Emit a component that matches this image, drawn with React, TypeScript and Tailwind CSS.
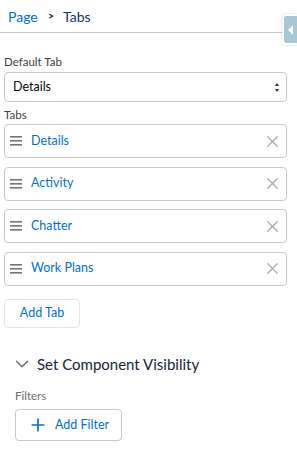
import { X, Plus, ChevronDown } from "lucide-react"

const tabs = ["Details", "Activity", "Chatter", "Work Plans"]

function Grip() {
    return (
        <svg width="12" height="10" viewBox="0 0 12 10" className="shrink-0">
            <rect x="0" y="0" width="12" height="1.6" fill="#747474" />
            <rect x="0" y="4" width="12" height="1.6" fill="#747474" />
            <rect x="0" y="8" width="12" height="1.6" fill="#747474" />
        </svg>
    )
}

export default function App() {
    return (
        <div className="relative h-[458px] w-[297px] overflow-hidden bg-white font-['Lato',sans-serif] text-[#16325c]">
            {/* Breadcrumb */}
            <div className="mr-[12px] flex h-[33px] items-center border-b border-[#c4c4c4] pl-[8px] text-[14px]">
                <span className="text-[#0070d2]">Page</span>
                <span className="ml-[10px] text-[11px] font-bold text-[#16325c]">&gt;</span>
                <span className="ml-[9px]">Tabs</span>
            </div>

            {/* Collapse tab on the edge */}
            <div className="absolute right-0 top-[14px] flex h-[31px] w-[15px] items-center justify-center rounded-l-[4px] border-y-2 border-l-2 border-white bg-[#a9c8d6] shadow-[0_0_2px_rgba(0,0,0,0.25)]">
                <div className="h-0 w-0 border-y-[5px] border-r-[5px] border-y-transparent border-r-white" />
            </div>

            <div className="px-[4px] pt-[21px]">
                {/* Default Tab */}
                <div className="text-[11.5px] leading-[16px] text-[#3e3e3c]">Default Tab</div>
                <div className="mt-[2px] flex h-[30px] w-[283px] items-center justify-between rounded-[4px] border border-[#c9c9c9] pl-[8px] pr-[7px] text-[12.5px] text-[#080707]">
                    <span>Details</span>
                    <span className="flex flex-col items-center gap-[3px]">
                        <span className="h-0 w-0 border-x-[2.5px] border-b-[3px] border-x-transparent border-b-[#16325c]" />
                        <span className="h-0 w-0 border-x-[2.5px] border-t-[3px] border-x-transparent border-t-[#16325c]" />
                    </span>
                </div>

                {/* Tabs */}
                <div className="mt-[5px] text-[11.5px] leading-[16px] text-[#3e3e3c]">Tabs</div>
                <div className="mt-[1px] flex flex-col gap-[8.6px]">
                    {tabs.map((t) => (
                        <div key={t} className="flex h-[34px] w-[283px] items-center rounded-[4px] border border-[#c9c9c9] pl-[5px] pr-[4px]">
                            <Grip />
                            <span className="ml-[9px] flex-1 text-[12.5px] text-[#0070d2]">{t}</span>
                            <X size={19} strokeWidth={1.5} color="#a8a6a4" />
                        </div>
                    ))}
                </div>

                {/* Add Tab */}
                <button className="mt-[13px] flex h-[29px] w-[76px] items-center justify-center rounded-[4px] border border-[#e5e5e5] text-[12.5px] text-[#0070d2]">
                    Add Tab
                </button>
            </div>

            {/* Visibility section */}
            <div className="mt-[25px] flex items-center gap-[4px] pl-[11px]">
                <ChevronDown size={22} strokeWidth={1.6} color="#706e6b" />
                <span className="text-[15px] text-[#16253a]">Set Component Visibility</span>
            </div>

            <div className="pl-[15px] pt-[13px]">
                <div className="text-[11.5px] leading-[16px] text-[#706e6b]">Filters</div>
                <button className="mt-[5px] flex h-[32px] w-[107px] items-center justify-center gap-[7px] rounded-[4px] border border-[#c9c9c9] text-[12.5px] text-[#0070d2]">
                    <Plus size={20} strokeWidth={2} color="#0070d2" />
                    Add Filter
                </button>
            </div>
        </div>
    )
}
